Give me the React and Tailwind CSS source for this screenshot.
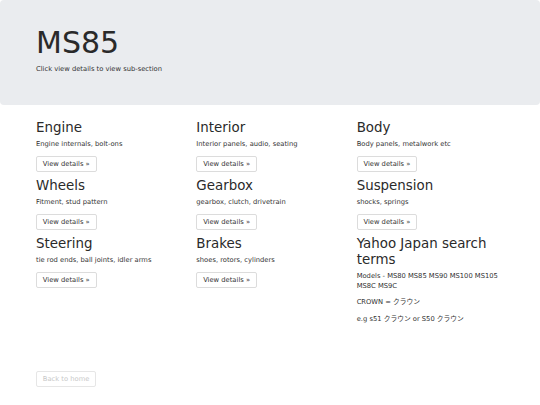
import React from "react";

const font = { fontFamily: '"DejaVu Sans", Verdana, sans-serif' };
const jp = { fontFamily: '"DejaVu Sans", "Noto Sans CJK JP", sans-serif' };

function Card({ title, desc }) {
  return (
    <div className="pr-[12px]">
      <h2 className="text-[13.4px] leading-[15.5px] mb-[3.5px] text-[#2a2a2a]">{title}</h2>
      <p className="text-[6.75px] leading-[10px] mb-[6.5px] text-[#333]">{desc}</p>
      <div className="flex mb-[6.5px]">
        <a className="flex items-center h-[16px] px-[5.8px] border border-[#dcdcdc] rounded-[2px] text-[6.75px] leading-[10px] text-[#333] bg-white">
          View details »
        </a>
      </div>
    </div>
  );
}

export default function App() {
  const cards = [
    ["Engine", "Engine internals, bolt-ons"],
    ["Interior", "Interior panels, audio, seating"],
    ["Body", "Body panels, metalwork etc"],
    ["Wheels", "Fitment, stud pattern"],
    ["Gearbox", "gearbox, clutch, drivetrain"],
    ["Suspension", "shocks, springs"],
    ["Steering", "tie rod ends, ball joints, idler arms"],
    ["Brakes", "shoes, rotors, cylinders"],
  ];
  return (
    <div className="w-[540px] h-[405px] bg-white overflow-hidden" style={font}>
      <div className="bg-[#eaecef] rounded-[4px] h-[105px] pt-[25px] pl-[36px] mb-[15px]">
        <h1 className="text-[30px] leading-[35.5px] mb-[3px] text-[#2a2a2a] font-normal">MS85</h1>
        <p className="text-[6.75px] leading-[10px] text-[#333]">Click view details to view sub-section</p>
      </div>
      <div className="ml-[36px] w-[481px] grid grid-cols-3">
        {cards.map(([t, d]) => (
          <Card key={t} title={t} desc={d} />
        ))}
        <div className="pr-[12px]">
          <h2 className="text-[13.4px] leading-[15.5px] mb-[3.5px] text-[#2a2a2a]">Yahoo Japan search terms</h2>
          <p className="text-[6.75px] leading-[10px] mb-[6.5px] text-[#333]">Models - MS80 MS85 MS90 MS100 MS105 MS8C MS9C</p>
          <p className="text-[6.75px] leading-[10px] mb-[6.5px] text-[#333]" style={jp}>CROWN = クラウン</p>
          <p className="text-[6.75px] leading-[10px] mb-[6.5px] text-[#333]" style={jp}>e.g s51 クラウン or S50 クラウン</p>
        </div>
      </div>
      <div className="ml-[36px] mt-[41px] flex">
        <a className="flex items-center h-[16px] px-[5.8px] border border-[#e6e6e6] rounded-[2px] text-[6.75px] leading-[10px] text-[#c8c8c8] bg-white">
          Back to home
        </a>
      </div>
    </div>
  );
}
